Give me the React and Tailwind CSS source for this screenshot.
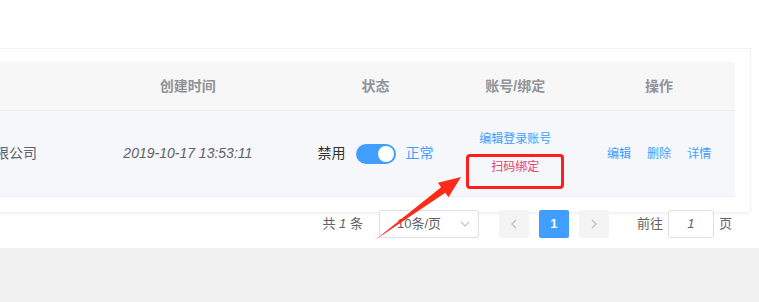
export default function App() {
  const font = { fontFamily: '"Liberation Sans", "Noto Sans CJK SC", sans-serif' };
  return (
    <div className="relative w-[759px] h-[302px] overflow-hidden bg-[#f0f0f0]" style={font}>
      <div className="h-[248px] bg-white pt-[48px]">
        {/* card */}
        <div className="mr-[8px] pr-[15px] pt-[13px] pb-[15px] bg-white border-r border-b border-t border-[#f2f2f2] shadow-[0_1px_3px_rgba(0,0,0,0.05)] rounded-br-[3px]">
          {/* header */}
          <div className="flex h-[49px] bg-[#f7f7f7] border-b border-[#ebeef5] text-[14px] font-bold text-[#909399]">
            <div className="w-[72px]"></div>
            <div className="w-[232px] flex items-center justify-center">创建时间</div>
            <div className="w-[144px] flex items-center justify-center">状态</div>
            <div className="w-[136px] flex items-center justify-center">账号/绑定</div>
            <div className="w-[152px] flex items-center justify-center">操作</div>
          </div>
          {/* body row */}
          <div className="flex h-[86px] bg-[#f5f7fa] border-b border-[#ebeef5] text-[14px] text-[#606266]">
            <div className="w-[72px] flex items-center justify-end pr-[35px] whitespace-nowrap">某某科技有限公司</div>
            <div className="w-[232px] flex items-center justify-center italic text-[#606266]">2019-10-17 13:53:11</div>
            <div className="w-[144px] flex items-center justify-center gap-[10px] text-[14px]">
              <span className="text-[#303133]">禁用</span>
              <span className="relative w-[40px] h-[20px] rounded-full bg-[#409eff]">
                <span className="absolute right-[2px] top-[2px] w-[16px] h-[16px] rounded-full bg-white"></span>
              </span>
              <span className="text-[#409eff]">正常</span>
            </div>
            <div className="w-[136px] flex flex-col items-center justify-center text-[12px] leading-[28px] pb-[1px]">
              <span className="text-[#409eff]">编辑登录账号</span>
              <span className="text-[#e6436d]">扫码绑定</span>
            </div>
            <div className="w-[152px] flex items-center justify-center gap-[16px] text-[12px] text-[#409eff]">
              <span>编辑</span>
              <span>删除</span>
              <span>详情</span>
            </div>
          </div>
        </div>
        {/* pagination */}
        <div className="relative -mt-[3px] flex items-center justify-end pr-[27px] h-[28px] text-[13px] text-[#606266]">
          <span className="whitespace-nowrap">共 <span className="italic">1</span> 条</span>
          <div className="ml-[16px] w-[100px] h-[28px] border border-[#dcdfe6] rounded-[3px] bg-white flex items-center pl-[17px] pr-[8px] justify-between">
            <span className="text-[#606266]">10条/页</span>
            <svg width="10" height="6" viewBox="0 0 10 6"><path d="M1 1 L5 5 L9 1" fill="none" stroke="#c0c4cc" strokeWidth="1.2" /></svg>
          </div>
          <div className="ml-[20px] w-[30px] h-[28px] bg-[#f4f4f5] rounded-[2px] flex items-center justify-center">
            <svg width="6" height="10" viewBox="0 0 6 10"><path d="M5 1 L1 5 L5 9" fill="none" stroke="#c0c4cc" strokeWidth="1.5" /></svg>
          </div>
          <div className="ml-[10px] w-[30px] h-[28px] bg-[#409eff] rounded-[2px] flex items-center justify-center text-white font-bold text-[13px]">1</div>
          <div className="ml-[10px] w-[30px] h-[28px] bg-[#f4f4f5] rounded-[2px] flex items-center justify-center">
            <svg width="6" height="10" viewBox="0 0 6 10"><path d="M1 1 L5 5 L1 9" fill="none" stroke="#c0c4cc" strokeWidth="1.5" /></svg>
          </div>
          <span className="ml-[28px]">前往</span>
          <div className="ml-[5px] w-[46px] h-[28px] border border-[#dcdfe6] rounded-[3px] bg-white flex items-center justify-center italic">1</div>
          <span className="ml-[5px]">页</span>
        </div>
      </div>
      {/* red highlight box */}
      <div className="absolute left-[466px] top-[154px] w-[98px] h-[35px] border-[3px] border-[#ff1f1f] rounded-[4px]"></div>
      {/* arrow */}
      <svg className="absolute left-0 top-0" width="759" height="302" viewBox="0 0 759 302">
        <polygon points="375,240 441.1,187.2 437.9,182.7 461,177 448.5,197.3 445.3,192.8" fill="#ff2a1a" />
      </svg>
    </div>
  );
}
